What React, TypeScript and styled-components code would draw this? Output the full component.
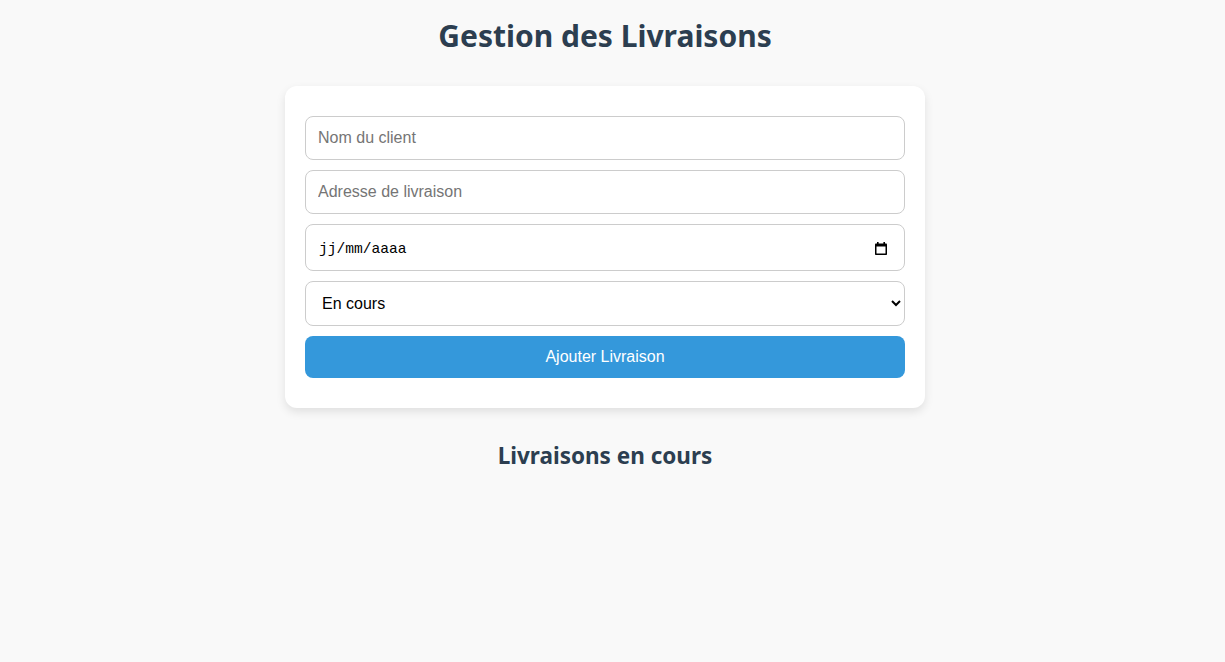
import React from "react";
import styled, { createGlobalStyle } from "styled-components";

const GlobalStyle = createGlobalStyle`
  html, body { margin: 0; padding: 0; background: #f9f9f9; }
  body { font-family: "Noto Sans", "Open Sans", sans-serif; color: #2c3e50; }
  * { box-sizing: border-box; }
`;

const Page = styled.div`
  padding: 14px 35px 20px 20px;
  display: flex;
  flex-direction: column;
  align-items: center;
`;

const Title = styled.h1`
  margin: 0 0 28px;
  font-size: 30px;
  line-height: 44px;
  font-weight: 700;
  color: #2c3e50;
  text-align: center;
`;

const Card = styled.form`
  width: 640px;
  background: #fff;
  border-radius: 12px;
  box-shadow: 0 4px 10px rgba(0, 0, 0, 0.1);
  padding: 30px 20px;
  display: flex;
  flex-direction: column;
  gap: 10px;
`;

const Field = styled.input`
  display: block;
  width: 100%;
  margin: 0;
  padding: 12px;
  border: 1px solid #ccc;
  border-radius: 8px;
  font-family: Arial, "Liberation Sans", sans-serif;
  font-size: 16px;
  color: #000;
  background: #fff;
  &::placeholder { color: #757575; }
`;

const DateWrap = styled.div`
  position: relative;
`;

const DateField = styled(Field)`
  font-family: "Liberation Mono", monospace;
  font-size: 14.6px;
  height: 47px;
  padding: 13px 12px 11px 13px;
  &::placeholder { color: #000; }
`;

const CalIcon = styled.svg`
  position: absolute;
  right: 18px;
  top: 18px;
  pointer-events: none;
`;

const Select = styled.select`
  display: block;
  width: 100%;
  margin: 0;
  padding: 12px;
  height: 45px;
  border: 1px solid #ccc;
  border-radius: 8px;
  font-family: Arial, "Liberation Sans", sans-serif;
  font-size: 16px;
  color: #000;
  background: #fff;
`;

const Button = styled.button`
  display: block;
  width: 100%;
  margin: 0;
  padding: 12px;
  border: none;
  border-radius: 8px;
  background: #3498db;
  color: #fff;
  font-family: Arial, "Liberation Sans", sans-serif;
  font-size: 16px;
  line-height: 18px;
  cursor: pointer;
`;

const SubTitle = styled.h2`
  margin: 32px 0 0;
  font-size: 22.5px;
  line-height: 32px;
  font-weight: 700;
  color: #2c3e50;
  text-align: center;
`;

export default function App() {
  return (
    <>
      <GlobalStyle />
      <Page>
        <Title>Gestion des Livraisons</Title>
        <Card onSubmit={(e) => e.preventDefault()}>
          <Field type="text" placeholder="Nom du client" />
          <Field type="text" placeholder="Adresse de livraison" />
          <DateWrap>
            <DateField type="text" placeholder="jj/mm/aaaa" />
            <CalIcon width="12" height="13" viewBox="0 0 12 13">
              <rect x="0" y="1.5" width="12" height="11.5" rx="0.8" fill="#000" />
              <rect x="1.5" y="4.5" width="9" height="7" fill="#fff" />
              <rect x="2" y="0" width="1.6" height="2.5" fill="#000" />
              <rect x="8.4" y="0" width="1.6" height="2.5" fill="#000" />
            </CalIcon>
          </DateWrap>
          <Select defaultValue="En cours">
            <option>En cours</option>
            <option>Livrée</option>
            <option>Annulée</option>
          </Select>
          <Button type="submit">Ajouter Livraison</Button>
        </Card>
        <SubTitle>Livraisons en cours</SubTitle>
      </Page>
    </>
  );
}
